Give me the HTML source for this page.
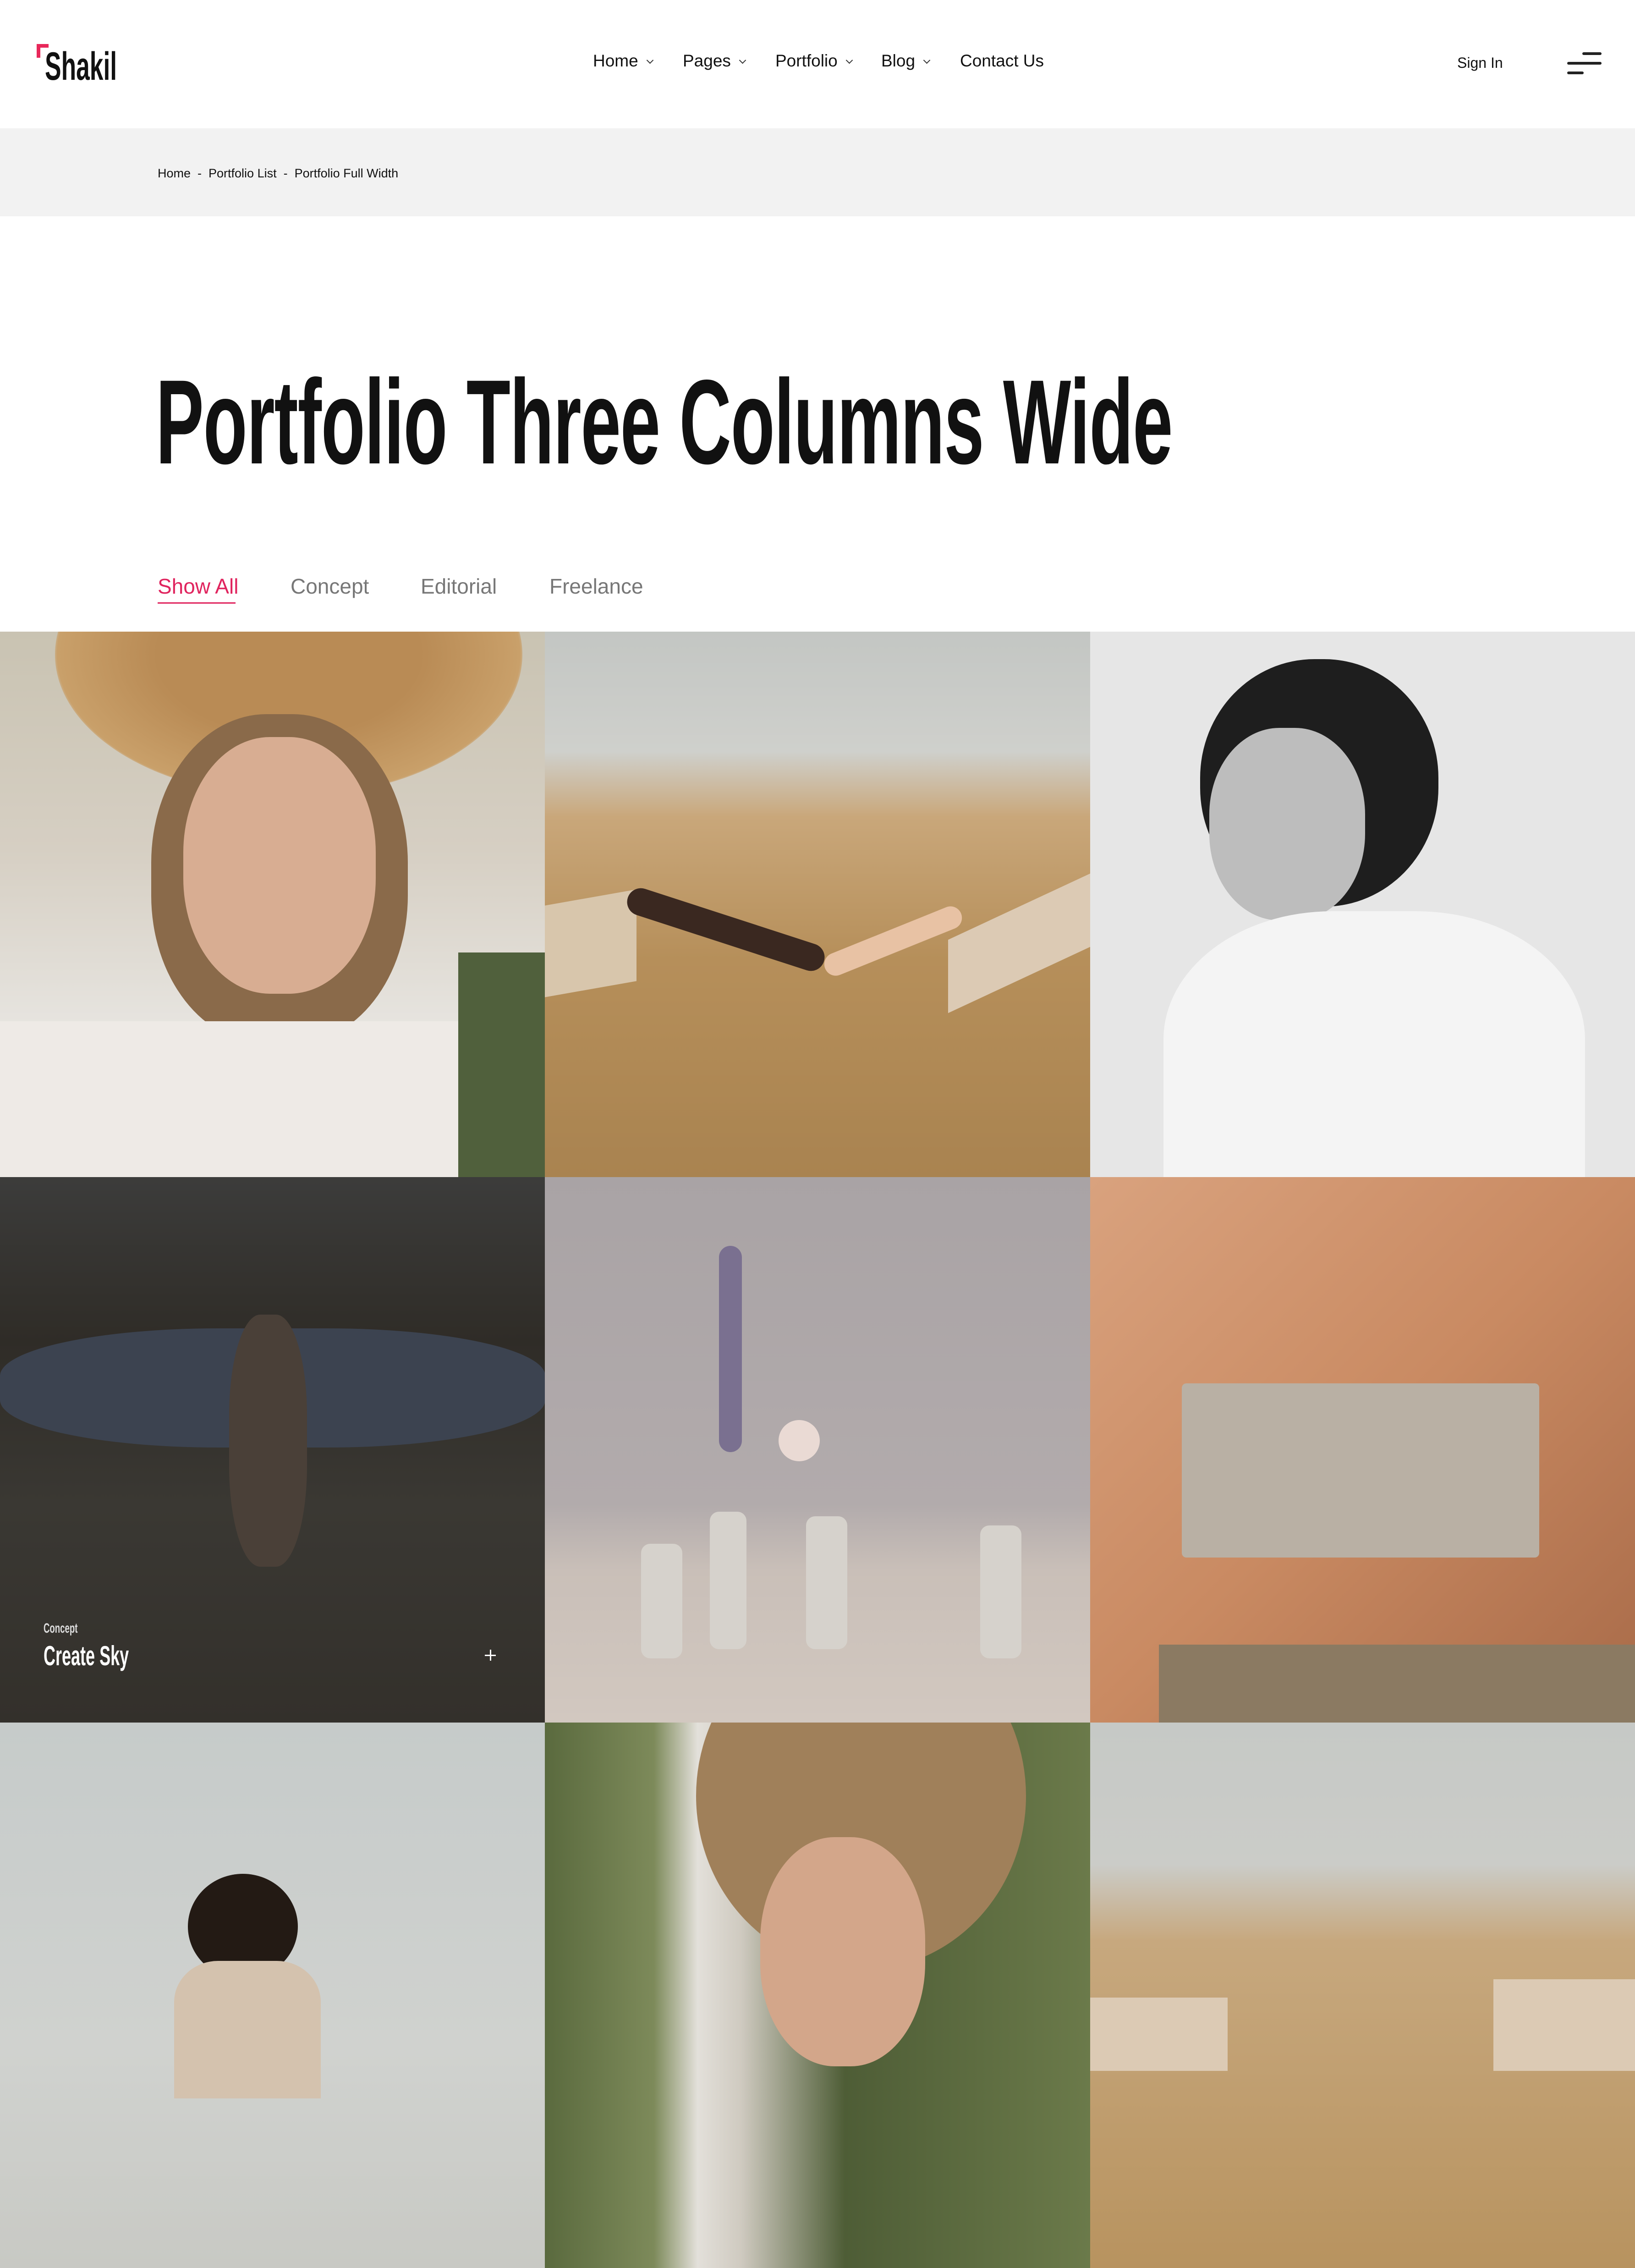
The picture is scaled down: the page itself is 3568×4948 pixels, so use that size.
<!DOCTYPE html>
<html><head><meta charset="utf-8"><style>
*{margin:0;padding:0;box-sizing:border-box}
body{width:3568px;height:4500px;overflow:hidden;background:#fff;font-family:"Liberation Sans",sans-serif;position:relative}
.a{position:absolute}
.cond{display:inline-block;transform-origin:0 0;font-weight:bold}
.nav{top:112px;font-size:37px;color:#111}
.chev{display:inline-block;width:11px;height:11px;border-right:2px solid #333;border-bottom:2px solid #333;transform:rotate(45deg);margin-left:20px;position:relative;top:-8px}
.t{position:absolute;width:1190px;height:1190px;overflow:hidden}
.f{top:1252px;font-size:46px;color:#777}
</style></head><body>
<div class="a" style="left:80px;top:96px;width:8px;height:30px;background:#e8285a"></div>
<div class="a" style="left:80px;top:96px;width:26px;height:8px;background:#e8285a"></div>
<div class="a" style="left:98px;top:96px"><span class="cond" style="font-size:86px;transform:scaleX(0.62);color:#111">Shakil</span></div>
<div class="a nav" style="left:1294px">Home<span class="chev"></span></div>
<div class="a nav" style="left:1490px">Pages<span class="chev"></span></div>
<div class="a nav" style="left:1692px">Portfolio<span class="chev"></span></div>
<div class="a nav" style="left:1923px">Blog<span class="chev"></span></div>
<div class="a nav" style="left:2095px">Contact Us</div>
<div class="a" style="left:3180px;top:119px;font-size:32px;color:#111">Sign In</div>
<div class="a" style="left:3453px;top:114px;width:42px;height:6px;background:#222;border-radius:3px"></div>
<div class="a" style="left:3420px;top:135px;width:75px;height:6px;background:#222;border-radius:3px"></div>
<div class="a" style="left:3420px;top:156px;width:36px;height:6px;background:#222;border-radius:3px"></div>
<div class="a" style="left:0;top:280px;width:3568px;height:192px;background:#f2f2f2"></div>
<div class="a" style="left:344px;top:363px;font-size:27px;color:#111">Home &nbsp;- &nbsp;Portfolio List &nbsp;- &nbsp;Portfolio Full Width</div>
<div class="a" style="left:340px;top:770px;white-space:nowrap"><span class="cond" style="font-size:262px;transform:scaleX(0.6);color:#111;letter-spacing:-2px">Portfolio Three Columns Wide</span></div>
<div class="a f" style="left:344px;color:#e0245e">Show All</div>
<div class="a" style="left:344px;top:1314px;width:170px;height:3px;background:#e0245e"></div>
<div class="a f" style="left:634px">Concept</div>
<div class="a f" style="left:918px">Editorial</div>
<div class="a f" style="left:1199px">Freelance</div>

<div class="t" style="left:0;top:1378px;background:linear-gradient(180deg,#c9c3b2 0%,#d6cfc3 40%,#e8e6e2 75%,#f0efed 100%)">
<div class="a" style="left:120px;top:-260px;width:1020px;height:620px;border-radius:50%;background:radial-gradient(ellipse,#b98b55 40%,#c9a06a 70%,rgba(200,160,100,0) 72%)"></div>
<div class="a" style="left:330px;top:180px;width:560px;height:720px;border-radius:45%;background:#8a6a4a"></div>
<div class="a" style="left:400px;top:230px;width:420px;height:560px;border-radius:45%;background:#d8ad92"></div>
<div class="a" style="left:0;top:850px;width:1190px;height:340px;background:#eeeae6"></div>
<div class="a" style="left:1000px;top:700px;width:190px;height:490px;background:#50603c"></div>
</div>
<div class="t" style="left:1189px;top:1378px;background:linear-gradient(180deg,#c3c6c3 0%,#cfd0cc 22%,#c9a77a 34%,#b68f5a 60%,#a98350 100%)">
<div class="a" style="left:0;top:580px;width:200px;height:200px;background:#d8c6ac;transform:skewY(-10deg)"></div>
<div class="a" style="left:170px;top:620px;width:450px;height:60px;background:#3a2820;border-radius:30px;transform:rotate(18deg)"></div>
<div class="a" style="left:880px;top:600px;width:310px;height:160px;background:#dccab4;transform:skewY(-25deg)"></div>
<div class="a" style="left:600px;top:650px;width:320px;height:50px;background:#e8c2a4;border-radius:25px;transform:rotate(-22deg)"></div>
</div>
<div class="t" style="left:2379px;top:1378px;background:#e6e6e6">
<div class="a" style="left:240px;top:60px;width:520px;height:540px;border-radius:48%;background:#1e1e1e"></div>
<div class="a" style="left:260px;top:210px;width:340px;height:420px;border-radius:45%;background:#bdbdbd"></div>
<div class="a" style="left:160px;top:610px;width:920px;height:700px;border-radius:40% 40% 0 0;background:#f4f4f4"></div>
</div>
<div class="t" style="left:0;top:2568px;background:linear-gradient(180deg,#3c3c3b 0%,#2f2c27 30%,#3a3833 60%,#33302b 100%)">
<div class="a" style="left:0;top:330px;width:1190px;height:260px;background:#3c4350;border-radius:40%"></div>
<div class="a" style="left:500px;top:300px;width:170px;height:550px;background:#4a4038;border-radius:40%"></div>
<div class="a" style="left:95px;top:968px;color:#ddd;font-size:30px"><span class="cond" style="transform:scaleX(0.62)">Concept</span></div>
<div class="a" style="left:95px;top:1010px;color:#fff;font-size:60px"><span class="cond" style="transform:scaleX(0.6)">Create Sky</span></div>
<div class="a" style="left:1058px;top:1042px;width:24px;height:3px;background:#fff"></div>
<div class="a" style="left:1069px;top:1031px;width:3px;height:24px;background:#fff"></div>
</div>
<div class="t" style="left:1189px;top:2568px;background:linear-gradient(180deg,#a9a3a5 0%,#b2abac 60%,#c9bfb8 72%,#d2c8c0 100%)">
<div class="a" style="left:380px;top:150px;width:50px;height:450px;background:#7a7090;border-radius:25px"></div>
<div class="a" style="left:510px;top:530px;width:90px;height:90px;background:#eadad4;border-radius:50%"></div>
<div class="a" style="left:210px;top:800px;width:90px;height:250px;background:#d6d2cc;border-radius:20px"></div>
<div class="a" style="left:360px;top:730px;width:80px;height:300px;background:#d6d2cc;border-radius:20px"></div>
<div class="a" style="left:570px;top:740px;width:90px;height:290px;background:#d6d2cc;border-radius:20px"></div>
<div class="a" style="left:950px;top:760px;width:90px;height:290px;background:#d6d2cc;border-radius:20px"></div>
</div>
<div class="t" style="left:2379px;top:2568px;background:linear-gradient(135deg,#d9a27e 0%,#c98a62 50%,#a86a48 100%)">
<div class="a" style="left:200px;top:450px;width:780px;height:380px;background:#b9b0a4;border-radius:10px"></div>
<div class="a" style="left:150px;top:1020px;width:1040px;height:170px;background:#8b7a62"></div>
</div>
<div class="t" style="left:0;top:3758px;background:linear-gradient(180deg,#c6cbca 0%,#d0d2cf 60%,#c8c9c4 100%)">
<div class="a" style="left:410px;top:330px;width:240px;height:230px;border-radius:50%;background:#231a14"></div>
<div class="a" style="left:380px;top:520px;width:320px;height:300px;border-radius:30% 30% 0 0;background:#d4c2ae"></div>
</div>
<div class="t" style="left:1189px;top:3758px;background:linear-gradient(90deg,#5a6a3e 0%,#7d8a5a 20%,#e3e0da 28%,#cfcac0 36%,#4e5d36 55%,#6b7a4a 100%)">
<div class="a" style="left:330px;top:-220px;width:720px;height:760px;border-radius:50%;background:#a0805a"></div>
<div class="a" style="left:470px;top:250px;width:360px;height:500px;border-radius:45%;background:#d3a68a"></div>
</div>
<div class="t" style="left:2379px;top:3758px;background:linear-gradient(180deg,#c6c9c6 0%,#cbccc8 26%,#c7a87e 40%,#b8935f 100%)">
<div class="a" style="left:0;top:600px;width:300px;height:160px;background:#dccab4"></div>
<div class="a" style="left:880px;top:560px;width:320px;height:200px;background:#dccab4"></div>
</div>
</body></html>
